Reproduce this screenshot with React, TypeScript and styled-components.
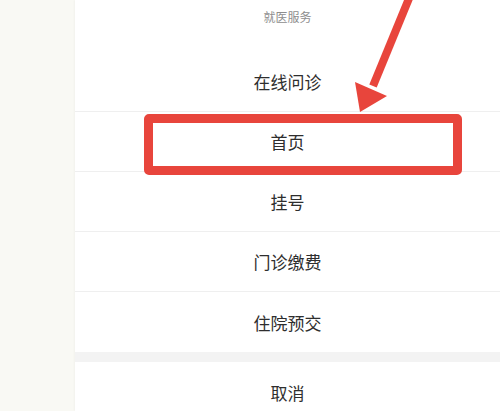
import React from 'react';
import styled, { createGlobalStyle } from 'styled-components';

const GlobalStyle = createGlobalStyle`
  html, body {
    margin: 0;
    padding: 0;
    background: #ffffff;
  }
  body {
    width: 500px;
    height: 411px;
    overflow: hidden;
    font-family: 'Noto Sans CJK SC', 'Noto Sans', sans-serif;
  }
`;

const Page = styled.div`
  position: relative;
  display: flex;
  width: 500px;
  height: 411px;
  overflow: hidden;
`;

const SidePane = styled.div`
  width: 75px;
  flex-shrink: 0;
  background: #f9f9f4;
`;

const Sheet = styled.div`
  position: relative;
  flex: 1;
  display: flex;
  flex-direction: column;
  background: #ffffff;
  box-shadow: -1px 0 2px rgba(0, 0, 0, 0.03);
`;

const Header = styled.div`
  height: 52px;
  flex-shrink: 0;
  display: flex;
  justify-content: center;
  padding-top: 8px;
  box-sizing: border-box;
  font-size: 12px;
  line-height: 18px;
  color: #8e8e8e;
`;

const Row = styled.div<{ $last?: boolean }>`
  height: 60px;
  flex-shrink: 0;
  box-sizing: border-box;
  display: flex;
  align-items: center;
  justify-content: center;
  font-size: 17px;
  color: #2e2e2e;
  border-bottom: ${(p) => (p.$last ? 'none' : '1px solid #efefef')};
`;

const Gap = styled.div`
  height: 10px;
  flex-shrink: 0;
  background: #f3f3f3;
`;

const Highlight = styled.div`
  position: absolute;
  left: 69px;
  top: 114px;
  width: 318px;
  height: 61px;
  box-sizing: border-box;
  border: 9px solid #e8453c;
  border-radius: 5px;
`;

const Overlay = styled.svg`
  position: absolute;
  left: 0;
  top: 0;
  pointer-events: none;
`;

const items = ['在线问诊', '首页', '挂号', '门诊缴费', '住院预交'];

const App: React.FC = () => {
  return (
    <>
      <GlobalStyle />
      <Page>
        <SidePane />
        <Sheet>
          <Header>就医服务</Header>
          {items.map((label, i) => (
            <Row key={label} $last={i === items.length - 1}>
              {label}
            </Row>
          ))}
          <Gap />
          <Row $last>取消</Row>
          <Highlight />
        </Sheet>
        <Overlay width="500" height="411" viewBox="0 0 500 411">
          <line x1="410" y1="-4" x2="373" y2="86" stroke="#e8453c" strokeWidth="8" />
          <polygon points="360,112 355,82 387,96" fill="#e8453c" />
        </Overlay>
      </Page>
    </>
  );
};

export default App;
